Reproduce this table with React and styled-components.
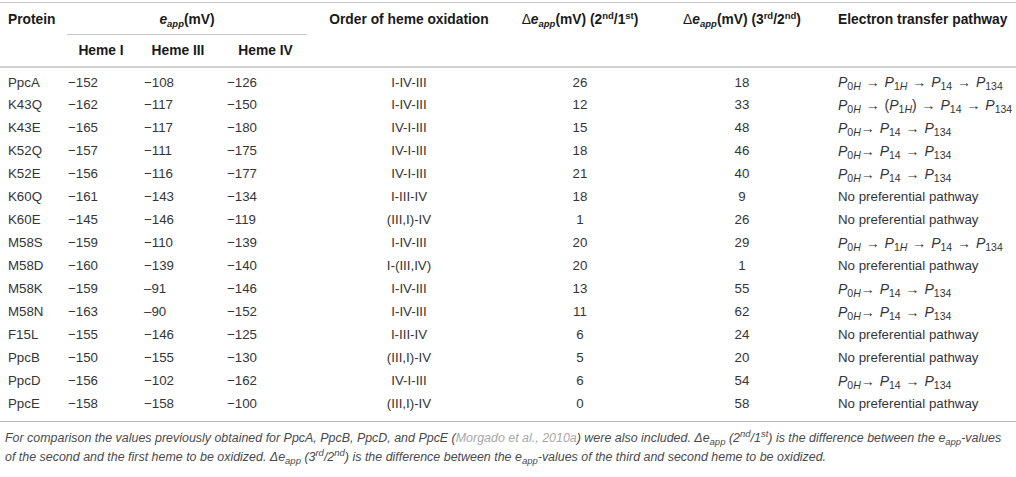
import React from 'react';
import styled, {createGlobalStyle} from 'styled-components';

const GlobalStyle = createGlobalStyle`
  body {
    margin: 0;
    background: #fff;
    font-family: "Liberation Sans", Arial, sans-serif;
  }
`;

const Page = styled.div`
  width: 1016px;
  padding-top: 2px;
`;

const Table = styled.table`
  width: 1016px;
  table-layout: fixed;
  border-collapse: collapse;
  border-top: 1px solid #c8c8c8;
  border-bottom: 1px solid #b8b8b8;
`;

const Head = styled.thead`
  border-bottom: 2px solid #d0d0d0;
`;

const Th = styled.th`
  font-size: 13.8px;
  font-weight: bold;
  color: #1a1a1a;
  padding: 0 ${({pad}) => pad || 0}px;
  height: 31px;
  text-align: ${({align}) => align || 'center'};
  vertical-align: middle;
  white-space: nowrap;
`;

const GroupTh = styled.th`
  padding: 0 8px 0 5px;
  height: 31px;
  vertical-align: bottom;
`;

const GroupLabel = styled.div`
  height: 31px;
  line-height: 33px;
  font-size: 13.8px;
  font-weight: bold;
  color: #1a1a1a;
  text-align: center;
  border-bottom: 1px solid #c8c8c8;
`;

const Delta = styled.span`
  font-weight: normal;
`;

const Row = styled.tr`
  height: 23px;
  &:first-child {
    height: 26px;
  }
  &:first-child td {
    padding-top: 3px;
  }
`;

const Td = styled.td`
  font-size: 13.3px;
  color: #353535;
  padding: 0 0 0 ${({pad}) => pad || 0}px;
  text-align: ${({align}) => align || 'left'};
  white-space: nowrap;
  vertical-align: middle;
`;

const Em = styled.span`
  font-style: italic;
`;

const Sub = styled.sub`
  font-size: ${({big}) => (big ? 10.5 : 9.5)}px;
  vertical-align: -3px;
  line-height: 0;
`;

const Sup = styled.sup`
  font-size: 9.5px;
  vertical-align: 5px;
  line-height: 0;
`;

const Path = styled.span`
  font-size: 14px;
  word-spacing: 1px;
`;

const Note = styled.p`
  margin: 7px 0 0;
  padding: 0 2px 0 5px;
  font-size: 12.45px;
  line-height: 19px;
  font-style: italic;
  color: #4a4a4a;
`;

const NoBreak = styled.span`
  white-space: nowrap;
`;

const Ref = styled.span`
  color: #a8a8a8;
`;

const Eapp = () => <><Em>e</Em><Sub><Em>app</Em></Sub></>;

const P = ({sub, h}) => (
  <span><Em>P</Em><Sub big>{sub}{h && <Em>H</Em>}</Sub></span>
);

const Arrow = ({tight}) => <span>{tight ? '→ ' : ' → '}</span>;

const pathways = {
  full: <Path><P sub="0" h/><Arrow/><P sub="1" h/><Arrow/><P sub="14"/><Arrow/><P sub="134"/></Path>,
  paren: <Path><P sub="0" h/><Arrow/>(<P sub="1" h/>)<Arrow/><P sub="14"/><Arrow/><P sub="134"/></Path>,
  short: <Path><P sub="0" h/><Arrow tight/><P sub="14"/><Arrow/><P sub="134"/></Path>,
  none: 'No preferential pathway',
};

const rows = [
  ['PpcA', '−152', '−108', '−126', 'I-IV-III', '26', '18', 'full'],
  ['K43Q', '−162', '−117', '−150', 'I-IV-III', '12', '33', 'paren'],
  ['K43E', '−165', '−117', '−180', 'IV-I-III', '15', '48', 'short'],
  ['K52Q', '−157', '−111', '−175', 'IV-I-III', '18', '46', 'short'],
  ['K52E', '−156', '−116', '−177', 'IV-I-III', '21', '40', 'short'],
  ['K60Q', '−161', '−143', '−134', 'I-III-IV', '18', '9', 'none'],
  ['K60E', '−145', '−146', '−119', '(III,I)-IV', '1', '26', 'none'],
  ['M58S', '−159', '−110', '−139', 'I-IV-III', '20', '29', 'full'],
  ['M58D', '−160', '−139', '−140', 'I-(III,IV)', '20', '1', 'none'],
  ['M58K', '−159', '–91', '−146', 'I-IV-III', '13', '55', 'short'],
  ['M58N', '−163', '–90', '−152', 'I-IV-III', '11', '62', 'short'],
  ['F15L', '−155', '−146', '−125', 'I-III-IV', '6', '24', 'none'],
  ['PpcB', '−150', '−155', '−130', '(III,I)-IV', '5', '20', 'none'],
  ['PpcD', '−156', '−102', '−162', 'IV-I-III', '6', '54', 'short'],
  ['PpcE', '−158', '−158', '−100', '(III,I)-IV', '0', '58', 'none'],
];

const widths = [62, 78, 76, 99, 188, 154, 170, 189];

export default function App() {
  return <Page>
    <GlobalStyle/>
    <Table>
      <colgroup>
        {widths.map((w, i) => <col key={i} style={{width: w}}/>)}
      </colgroup>
      <Head>
        <tr>
          <Th align="left" pad={8}>Protein</Th>
          <GroupTh colSpan={3}>
            <GroupLabel><Eapp/>(mV)</GroupLabel>
          </GroupTh>
          <Th>Order of heme oxidation</Th>
          <Th><Delta>Δ</Delta><Eapp/>(mV) (2<Sup>nd</Sup>/1<Sup>st</Sup>)</Th>
          <Th><Delta>Δ</Delta><Eapp/>(mV) (3<Sup>rd</Sup>/2<Sup>nd</Sup>)</Th>
          <Th align="left" pad={11}>Electron transfer pathway</Th>
        </tr>
        <tr>
          <Th/>
          <Th>Heme I</Th>
          <Th>Heme III</Th>
          <Th>Heme IV</Th>
          <Th/>
          <Th/>
          <Th/>
          <Th/>
        </tr>
      </Head>
      <tbody>
        {rows.map(r => (
          <Row key={r[0]}>
            <Td pad={8}>{r[0]}</Td>
            <Td pad={6}>{r[1]}</Td>
            <Td pad={4}>{r[2]}</Td>
            <Td pad={11}>{r[3]}</Td>
            <Td align="center">{r[4]}</Td>
            <Td align="center">{r[5]}</Td>
            <Td align="center">{r[6]}</Td>
            <Td pad={11}>{pathways[r[7]]}</Td>
          </Row>
        ))}
        <tr style={{height: 6}}><td colSpan={8}/></tr>
      </tbody>
    </Table>
    <Note>
      For comparison the values previously obtained for PpcA, PpcB, PpcD, and PpcE (<Ref>Morgado et al., 2010a</Ref>) were also included. Δe<Sub>app</Sub> (2<Sup>nd</Sup>/1<Sup>st</Sup>) is the difference between the <NoBreak>e<Sub>app</Sub>-values</NoBreak> of the second and the first heme to be oxidized. Δe<Sub>app</Sub> (3<Sup>rd</Sup>/2<Sup>nd</Sup>) is the difference between the <NoBreak>e<Sub>app</Sub>-values</NoBreak> of the third and second heme to be oxidized.
    </Note>
  </Page>;
}
